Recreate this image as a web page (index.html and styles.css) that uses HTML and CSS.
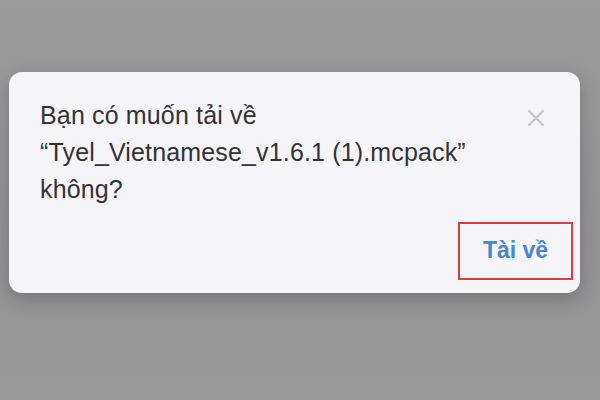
FILE: index.html
```html
<!DOCTYPE html>
<html lang="vi">
<head>
<meta charset="utf-8">
<link rel="stylesheet" href="styles.css">
</head>
<body>
  <div class="dialog">
    <div class="head">
      <p class="msg">Bạn có muốn tải về<br>“Tyel_Vietnamese_v1.6.1 (1).mcpack”<br>không?</p>
      <span class="close" aria-label="Đóng">
        <svg width="20" height="20" viewBox="0 0 20 20"><path d="M3 3 L17 17 M17 3 L3 17" stroke="#c6c6ca" stroke-width="2.2" stroke-linecap="round" fill="none"/></svg>
      </span>
    </div>
    <div class="actions">
      <span class="btn">Tài về</span>
    </div>
  </div>
</body>
</html>
```
FILE: styles.css
```css
html, body {
  margin: 0;
  height: 100%;
}
body {
  width: 600px;
  height: 400px;
  box-sizing: border-box;
  padding: 72px 20px 0 9px;
  background: linear-gradient(#9c9a9c, #949295 60%, #9a989b);
  font-family: "Liberation Sans", Arial, sans-serif;
  overflow: hidden;
}
.dialog {
  width: 571px;
  height: 221px;
  box-sizing: border-box;
  background: #f5f5f9;
  border-radius: 13px;
  box-shadow: 0 6px 18px rgba(60, 58, 62, 0.35);
  padding: 25px 7px 0 31px;
  display: flex;
  flex-direction: column;
}
.head {
  display: flex;
  justify-content: space-between;
  align-items: flex-start;
}
.msg {
  margin: 0;
  font-size: 25px;
  line-height: 37px;
  color: #333336;
  letter-spacing: 0.15px;
}
.close {
  margin: 11px 27px 0 0;
  width: 20px;
  height: 20px;
  display: block;
}
.close svg { display: block; }
.actions {
  display: flex;
  justify-content: flex-end;
  margin-top: 14px;
}
.btn {
  width: 115px;
  height: 58px;
  box-sizing: border-box;
  border: 2.5px solid #e23a3a;
  display: flex;
  align-items: center;
  justify-content: center;
  color: #4487d4;
  font-size: 23px;
  font-weight: bold;
  padding-bottom: 2px;
}
```
